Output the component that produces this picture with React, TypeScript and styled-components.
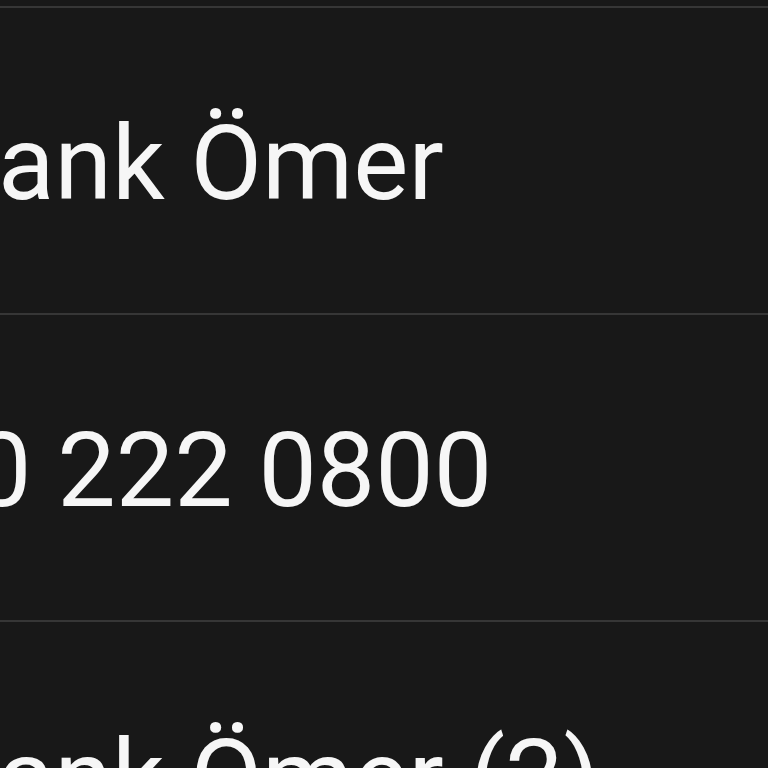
import styled, { createGlobalStyle } from "styled-components";

const GlobalStyle = createGlobalStyle`
  html, body {
    margin: 0;
    padding: 0;
    background: #181818;
    overflow: hidden;
  }
`;

type Entry = { label: string; shift: number };

const entries: Entry[] = [
  { label: "ank Ömer", shift: -2 },
  { label: "0 222 0800", shift: -27 },
  { label: "ank Ömer (2)", shift: -2 },
];

const App = () => {
  return (
    <>
      <GlobalStyle />
      <List>
        {entries.map((entry) => (
          <Row key={entry.label}>
            <Label $shift={entry.shift}>{entry.label}</Label>
          </Row>
        ))}
      </List>
    </>
  );
};

export default App;

const List = styled.div`
  width: 768px;
  height: 768px;
  overflow: hidden;
  padding-top: 6px;
  box-sizing: border-box;
  background: #181818;
`;

const Row = styled.div`
  height: 307px;
  box-sizing: border-box;
  border-top: 2px solid #363636;
  padding-top: 6px;
  display: flex;
  align-items: center;
  white-space: nowrap;
`;

const Label = styled.span<{ $shift: number }>`
  margin-left: ${(p) => p.$shift}px;
  font-family: Roboto, "Noto Sans", sans-serif;
  font-size: 104px;
  color: #f6f6f6;
  line-height: 1;
`;
